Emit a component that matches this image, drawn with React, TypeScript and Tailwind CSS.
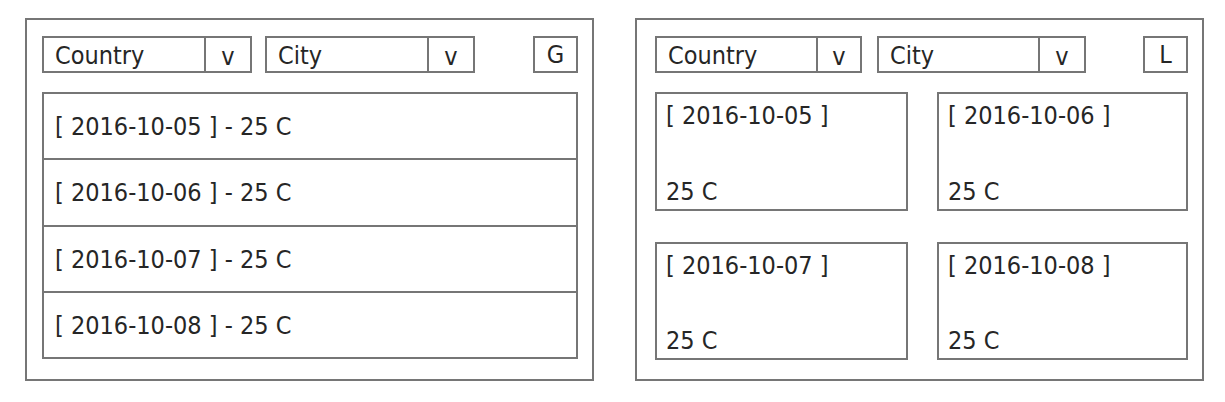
import React from "react";

const font = { fontFamily: '"DejaVu Sans Condensed", "DejaVu Sans", Verdana, sans-serif' };

function Select({ label, w, vw }: { label: string; w: string; vw: string }) {
  return (
    <div className={`flex h-[37px] border-2 border-[#767676] ${w}`}>
      <div className="flex flex-1 items-center pl-[11px] pt-[2px]">{label}</div>
      <div className={`flex items-center justify-center border-l-2 border-[#767676] pt-[4px] ${vw}`}>v</div>
    </div>
  );
}

const dates = ["2016-10-05", "2016-10-06", "2016-10-07", "2016-10-08"];

export default function App() {
  return (
    <div
      className="flex h-[402px] w-[1225px] gap-[41px] bg-white pl-[25px] pt-[18px] text-[25px] leading-[30px] text-[#262626]"
      style={font}
    >
      {/* List view panel */}
      <div className="flex h-[363px] w-[569px] flex-col border-2 border-[#767676] pl-[15px] pr-[14px] pt-[16px]">
        <div className="flex items-center">
          <Select label="Country" w="w-[210px]" vw="w-[46px]" />
          <div className="ml-[13px]">
            <Select label="City" w="w-[210px]" vw="w-[46px]" />
          </div>
          <div className="ml-auto flex h-[37px] w-[45px] items-center justify-center border-2 border-[#767676] pt-[1px]">
            G
          </div>
        </div>
        <div className="mt-[19px] flex h-[267px] flex-col border-2 border-[#767676]">
          {dates.map((d, i) => (
            <div
              key={d}
              className={`flex flex-1 items-center pl-[11px] pt-[2px] ${i > 0 ? "border-t-2 border-[#767676]" : ""}`}
            >
              [ {d} ] - 25 C
            </div>
          ))}
        </div>
      </div>

      {/* Grid view panel */}
      <div className="flex h-[363px] w-[569px] flex-col border-2 border-[#767676] pl-[18px] pr-[14px] pt-[16px]">
        <div className="flex items-center">
          <Select label="Country" w="w-[207px]" vw="w-[44px]" />
          <div className="ml-[15px]">
            <Select label="City" w="w-[209px]" vw="w-[46px]" />
          </div>
          <div className="ml-auto flex h-[37px] w-[45px] items-center justify-center border-2 border-[#767676] pt-[1px]">
            L
          </div>
        </div>
        <div className="mt-[19px] grid grid-cols-[253px_251px] grid-rows-[119px_118px] gap-x-[29px] gap-y-[31px]">
          {dates.map((d) => (
            <div
              key={d}
              className="flex flex-col justify-between border-2 border-[#767676] pb-[2px] pl-[9px] pt-[7px]"
            >
              <div>[ {d} ]</div>
              <div>25 C</div>
            </div>
          ))}
        </div>
      </div>
    </div>
  );
}
